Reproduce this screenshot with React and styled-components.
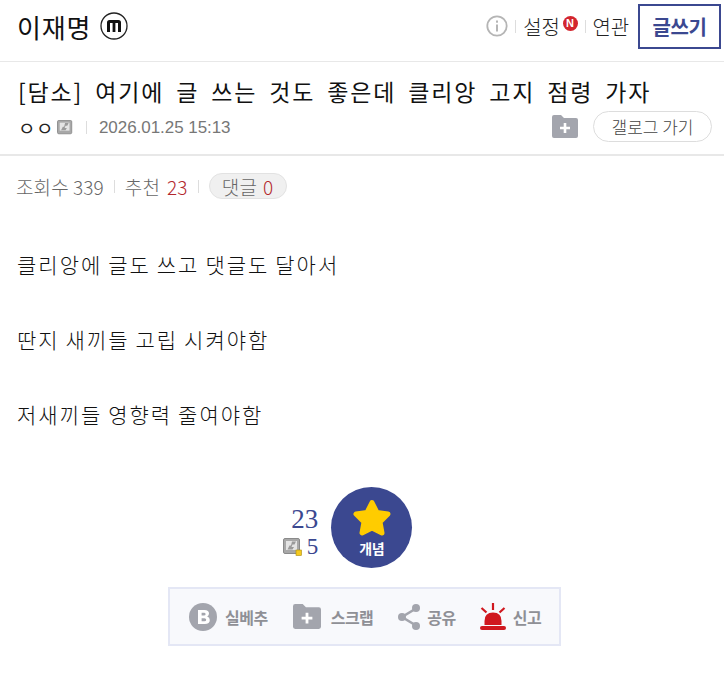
import React from "react";
import styled, { createGlobalStyle } from "styled-components";

const Global = createGlobalStyle`
  * { box-sizing: border-box; }
  body {
    margin: 0;
    background: #fff;
    font-family: "Noto Sans CJK KR", "Liberation Sans", sans-serif;
    color: #111;
  }
`;

const Page = styled.div`
  width: 724px;
  height: 674px;
  overflow: hidden;
`;

const Header = styled.header`
  height: 62px;
  display: flex;
  align-items: center;
  justify-content: space-between;
  padding: 0 3px 9px 17px;
  border-bottom: 1px solid #e8e8e8;
`;

const GalleryName = styled.div`
  display: flex;
  align-items: center;
  gap: 9px;
  font-size: 26px;
  font-weight: 400;
  letter-spacing: 0.8px;
  color: #111;
`;

const HeaderRight = styled.div`
  display: flex;
  align-items: center;
`;

const NavLink = styled.span`
  font-size: 20px;
  font-weight: 300;
  letter-spacing: -0.2px;
  color: #222;
`;

const Sep = styled.i`
  display: inline-block;
  flex: none;
  width: 1px;
  height: ${(p) => p.$h || 13}px;
  background: #ddd;
  margin: 0 ${(p) => p.$m || 8}px;
`;

const WriteButton = styled.div`
  width: 83px;
  height: 45px;
  margin-left: 9px;
  border: 2px solid #3b4890;
  display: flex;
  align-items: center;
  justify-content: center;
  color: #3b4890;
  font-size: 20px;
  font-weight: 700;
  letter-spacing: -0.4px;
`;

const PostHead = styled.div`
  height: 94px;
  padding: 13px 12px 0 18px;
  border-bottom: 2px solid #e8e8e8;
`;

const Title = styled.h1`
  margin: 0;
  font-size: 23px;
  line-height: 32px;
  font-weight: 400;
  letter-spacing: 1.84px;
  word-spacing: 5px;
  color: #111;
  white-space: nowrap;
`;

const MetaRow = styled.div`
  display: flex;
  align-items: center;
  justify-content: space-between;
  margin-top: 3px;
  height: 32px;
`;

const MetaLeft = styled.div`
  display: flex;
  align-items: center;
  padding-top: 3px;
`;

const Nick = styled.span`
  font-size: 19px;
  color: #222;
  letter-spacing: 0.5px;
  line-height: 1;
  margin-right: 3px;
`;

const DateText = styled.span`
  font-family: "Liberation Sans", sans-serif;
  font-size: 17px;
  color: #777;
  letter-spacing: -0.05px;
`;

const MetaRight = styled.div`
  display: flex;
  align-items: center;
  gap: 15px;
`;

const PillLink = styled.div`
  width: 119px;
  height: 31px;
  border: 1px solid #ddd;
  border-radius: 16px;
  display: flex;
  align-items: center;
  justify-content: center;
  font-size: 17px;
  font-weight: 300;
  color: #444;
  letter-spacing: 0;
`;

const Stats = styled.div`
  display: flex;
  align-items: center;
  height: 26px;
  margin: 17px 0 0 16px;
  font-size: 19px;
  font-weight: 300;
  color: #666;
  letter-spacing: 0.1px;
`;

const Red = styled.span`
  color: #b3282d;
  margin-left: ${(p) => p.$gap || 0}px;
`;

const CommentPill = styled.span`
  display: inline-flex;
  align-items: center;
  justify-content: center;
  width: 78px;
  height: 26px;
  background: #f0f0f0;
  border: 1px solid #e2e2e2;
  border-radius: 13px;
  gap: 6px;
`;

const Body = styled.div`
  padding: 51px 0 0 17px;
`;

const Line = styled.p`
  margin: 0 0 47px;
  height: 28px;
  line-height: 28px;
  font-size: 21px;
  font-weight: 300;
  letter-spacing: 2px;
  word-spacing: -0.7px;
  color: #111;
`;

const RecommendRow = styled.div`
  display: flex;
  justify-content: center;
  align-items: flex-start;
  gap: 13px;
  margin: 59px 0 19px;
  padding-right: 29px;
`;

const Counts = styled.div`
  display: flex;
  flex-direction: column;
  align-items: flex-end;
  padding-top: 17px;
  font-family: "Liberation Serif", serif;
  color: #3b4890;
`;

const Big = styled.div`
  font-size: 27px;
  line-height: 30px;
`;

const Small = styled.div`
  display: flex;
  align-items: center;
  gap: 5px;
  font-size: 23px;
  line-height: 26px;
`;

const StarButton = styled.div`
  width: 81px;
  height: 81px;
  border-radius: 50%;
  background: #3b4890;
  display: flex;
  flex-direction: column;
  align-items: center;
  padding-top: 12px;
  color: #fff;
  font-size: 14px;
  font-weight: 700;
  letter-spacing: -0.3px;
`;

const StarLabel = styled.span`
  margin-top: 3px;
  line-height: 16px;
`;

const ActionBox = styled.div`
  width: 393px;
  height: 59px;
  margin-left: 168px;
  border: 2px solid #e4e7f5;
  background: #f8f9fc;
  display: flex;
  align-items: center;
  padding-left: 19px;
`;

const Action = styled.div`
  display: flex;
  align-items: center;
  gap: ${(p) => p.$gap || 8}px;
  margin-right: ${(p) => p.$mr || 0}px;
  font-size: 16px;
  font-weight: 700;
  color: #8f9096;
  letter-spacing: -0.5px;
`;

const MIcon = () => (
  <svg width="28" height="28" viewBox="0 0 28 28">
    <circle cx="14" cy="14" r="13" fill="#fff" stroke="#222" strokeWidth="1.3" />
    <path
      d="M7 20V10.5Q7 8 9.5 8H18.5Q21 8 21 10.5V20H18V11H15.4V20H12.6V11H10V20Z"
      fill="#111"
    />
  </svg>
);

const InfoIcon = () => (
  <svg width="22" height="22" viewBox="0 0 22 22">
    <circle cx="11" cy="11" r="9.7" fill="none" stroke="#b5b5b5" strokeWidth="1.8" />
    <rect x="10" y="9.5" width="2" height="7" fill="#b5b5b5" />
    <rect x="10" y="5.5" width="2" height="2.2" fill="#b5b5b5" />
  </svg>
);

const NewBadge = styled.span`
  width: 15px;
  height: 15px;
  margin: -6px 0 0 3px;
  border-radius: 50%;
  background: #d3262e;
  color: #fff;
  font-family: "Liberation Sans", sans-serif;
  font-size: 11px;
  font-weight: 700;
  display: flex;
  align-items: center;
  justify-content: center;
`;

const FolderPlus = ({ w = 26, h = 23 }) => (
  <svg width={w} height={h} viewBox="0 0 26 23">
    <path d="M0 2Q0 0 2 0H9L12 3H24Q26 3 26 5V21Q26 23 24 23H2Q0 23 0 21Z" fill="#a3a5ad" />
    <path d="M13 8V18M8 13H18" stroke="#fff" strokeWidth="2.6" />
  </svg>
);

const GonicIcon = ({ dot }) => (
  <svg width={dot ? 19 : 17} height={dot ? 18 : 16} viewBox="0 0 19 18">
    <rect x="0.5" y="0.5" width="16" height="15" rx="1.5" fill="#a8a8a8" stroke="#8a8a8a" />
    <rect x="3" y="3" width="11" height="9" fill="#e4e4e4" />
    <path d="M9 3.5H13L11.5 6.5H9.5L8.5 9H11L9.5 11.5H4.5L6.5 7.5H8Z" fill="#9a9a9a" />
    {dot && <rect x="13" y="12" width="5.5" height="5.5" fill="#f4c91f" stroke="#a88a10" strokeWidth="0.6" />}
  </svg>
);

const StarIcon = () => (
  <svg width="40" height="38" viewBox="0 0 40 38">
    <path
      d="M20 3.5L25 13.5L36 15L28 23L30 34L20 29L10 34L12 23L4 15L15 13.5Z"
      fill="#fc0"
      stroke="#fc0"
      strokeWidth="5"
      strokeLinejoin="round"
    />
  </svg>
);

const BestIcon = () => (
  <svg width="28" height="28" viewBox="0 0 28 28">
    <circle cx="14" cy="14" r="14" fill="#a3a5ad" />
    <path
      fillRule="evenodd"
      d="M9 7H15.5Q20 7 20 10.5Q20 12.6 18.2 13.5Q20.8 14.4 20.8 17Q20.8 21 15.8 21H9ZM12.6 9.8V12.6H15Q16.6 12.6 16.6 11.2Q16.6 9.8 15 9.8ZM12.6 15.2V18.2H15.4Q17.2 18.2 17.2 16.7Q17.2 15.2 15.4 15.2Z"
      fill="#fff"
    />
  </svg>
);

const ShareIcon = () => (
  <svg width="22" height="26" viewBox="0 0 22 26">
    <path d="M18 4.5L4 13L18 21.5" fill="none" stroke="#a3a5ad" strokeWidth="2.6" />
    <circle cx="18" cy="4" r="4" fill="#a3a5ad" />
    <circle cx="4" cy="13" r="4" fill="#a3a5ad" />
    <circle cx="18" cy="22" r="4" fill="#a3a5ad" />
  </svg>
);

const SirenIcon = () => (
  <svg width="26" height="27" viewBox="0 0 26 27">
    <path d="M4.5 22V18Q4.5 9.5 13 9.5Q21.5 9.5 21.5 18V22Z" fill="#d0181f" />
    <rect x="0" y="23" width="26" height="4" rx="2" fill="#d0181f" />
    <path d="M13 0V7M1.5 5L6.5 9.5M24.5 5L19.5 9.5" stroke="#d0181f" strokeWidth="2.2" />
  </svg>
);

export default function App() {
  return (
    <Page>
      <Global />
      <Header>
        <GalleryName>
          이재명 <MIcon />
        </GalleryName>
        <HeaderRight>
          <InfoIcon />
          <Sep $m={7} />
          <NavLink>설정</NavLink>
          <NewBadge>N</NewBadge>
          <Sep $m={7} />
          <NavLink>연관</NavLink>
          <WriteButton>글쓰기</WriteButton>
        </HeaderRight>
      </Header>

      <PostHead>
        <Title>[담소] 여기에 글 쓰는 것도 좋은데 클리앙 고지 점령 가자</Title>
        <MetaRow>
          <MetaLeft>
            <Nick>ㅇㅇ</Nick>
            <GonicIcon />
            <Sep $m={12} />
            <DateText>2026.01.25 15:13</DateText>
          </MetaLeft>
          <MetaRight>
            <FolderPlus />
            <PillLink>갤로그 가기</PillLink>
          </MetaRight>
        </MetaRow>
      </PostHead>

      <Stats>
        조회수 339
        <Sep $m={10} />
        추천<Red $gap={7}>23</Red>
        <Sep $m={10} />
        <CommentPill>
          댓글 <Red>0</Red>
        </CommentPill>
      </Stats>

      <Body>
        <Line>클리앙에 글도 쓰고 댓글도 달아서</Line>
        <Line>딴지 새끼들 고립 시켜야함</Line>
        <Line>저새끼들 영향력 줄여야함</Line>
      </Body>

      <RecommendRow>
        <Counts>
          <Big>23</Big>
          <Small>
            <GonicIcon dot />5
          </Small>
        </Counts>
        <StarButton>
          <StarIcon />
          <StarLabel>개념</StarLabel>
        </StarButton>
      </RecommendRow>

      <ActionBox>
        <Action $mr={25}>
          <BestIcon />
          실베추
        </Action>
        <Action $mr={25} $gap={10}>
          <FolderPlus w={28} h={25} />
          스크랩
        </Action>
        <Action $mr={24} $gap={7}>
          <ShareIcon />
          공유
        </Action>
        <Action $gap={7}>
          <SirenIcon />
          신고
        </Action>
      </ActionBox>
    </Page>
  );
}
